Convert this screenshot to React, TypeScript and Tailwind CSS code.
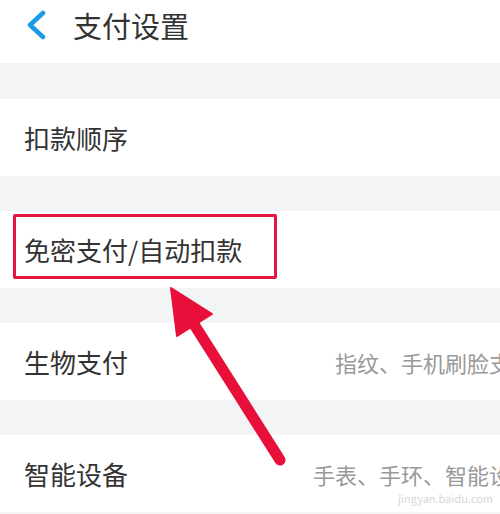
import React from 'react';

const font = { fontFamily: '"Noto Sans CJK SC", "Noto Sans", sans-serif' };

function Row({ title, desc, boxed }: { title: string; desc?: string; boxed?: boolean }) {
  return (
    <div className="relative flex h-[77px] items-center justify-between bg-white pl-6 whitespace-nowrap">
      <span className="text-[26px] leading-none text-[#333]">{title}</span>
      {desc && <span className="text-[22px] leading-none text-[#999] -mr-[33px]">{desc}</span>}
      {boxed && (
        <div className="absolute left-[13px] top-[3px] h-[65px] w-[264px] rounded-[2px] border-[3px] border-[#e2163f]" />
      )}
    </div>
  );
}

export default function App() {
  return (
    <div className="relative h-[514px] w-[500px] overflow-hidden bg-[#f3f4f5]" style={font}>
      <div className="flex h-[63px] items-start bg-white pt-[10px]">
        <svg width="22" height="30" viewBox="0 0 22 30" className="ml-[25px]">
          <path d="M18 3 L5 15 L18 27" fill="none" stroke="#1a9be6" strokeWidth="4.5" strokeLinecap="round" strokeLinejoin="round" />
        </svg>
        <span className="ml-[26px] mt-[1px] text-[29px] leading-none text-[#333]">支付设置</span>
      </div>
      <div className="mt-[36px] flex flex-col gap-[35px]">
        <Row title="扣款顺序" />
        <Row title="免密支付/自动扣款" boxed />
        <Row title="生物支付" desc="指纹、手机刷脸支付" />
        <Row title="智能设备" desc="手表、手环、智能设备" />
      </div>
      <div className="absolute left-[398px] top-[490px] text-[11px] text-[#d6d6d6]">jingyan.baidu.com</div>
      <svg className="absolute left-0 top-0" width="500" height="514" viewBox="0 0 500 514">
        <line x1="280" y1="460" x2="190" y2="318" stroke="#e8103a" strokeWidth="11" strokeLinecap="round" />
        <polygon points="171,288 177,336 212,314" fill="#e8103a" stroke="#e8103a" strokeWidth="2" strokeLinejoin="round" />
      </svg>
    </div>
  );
}
